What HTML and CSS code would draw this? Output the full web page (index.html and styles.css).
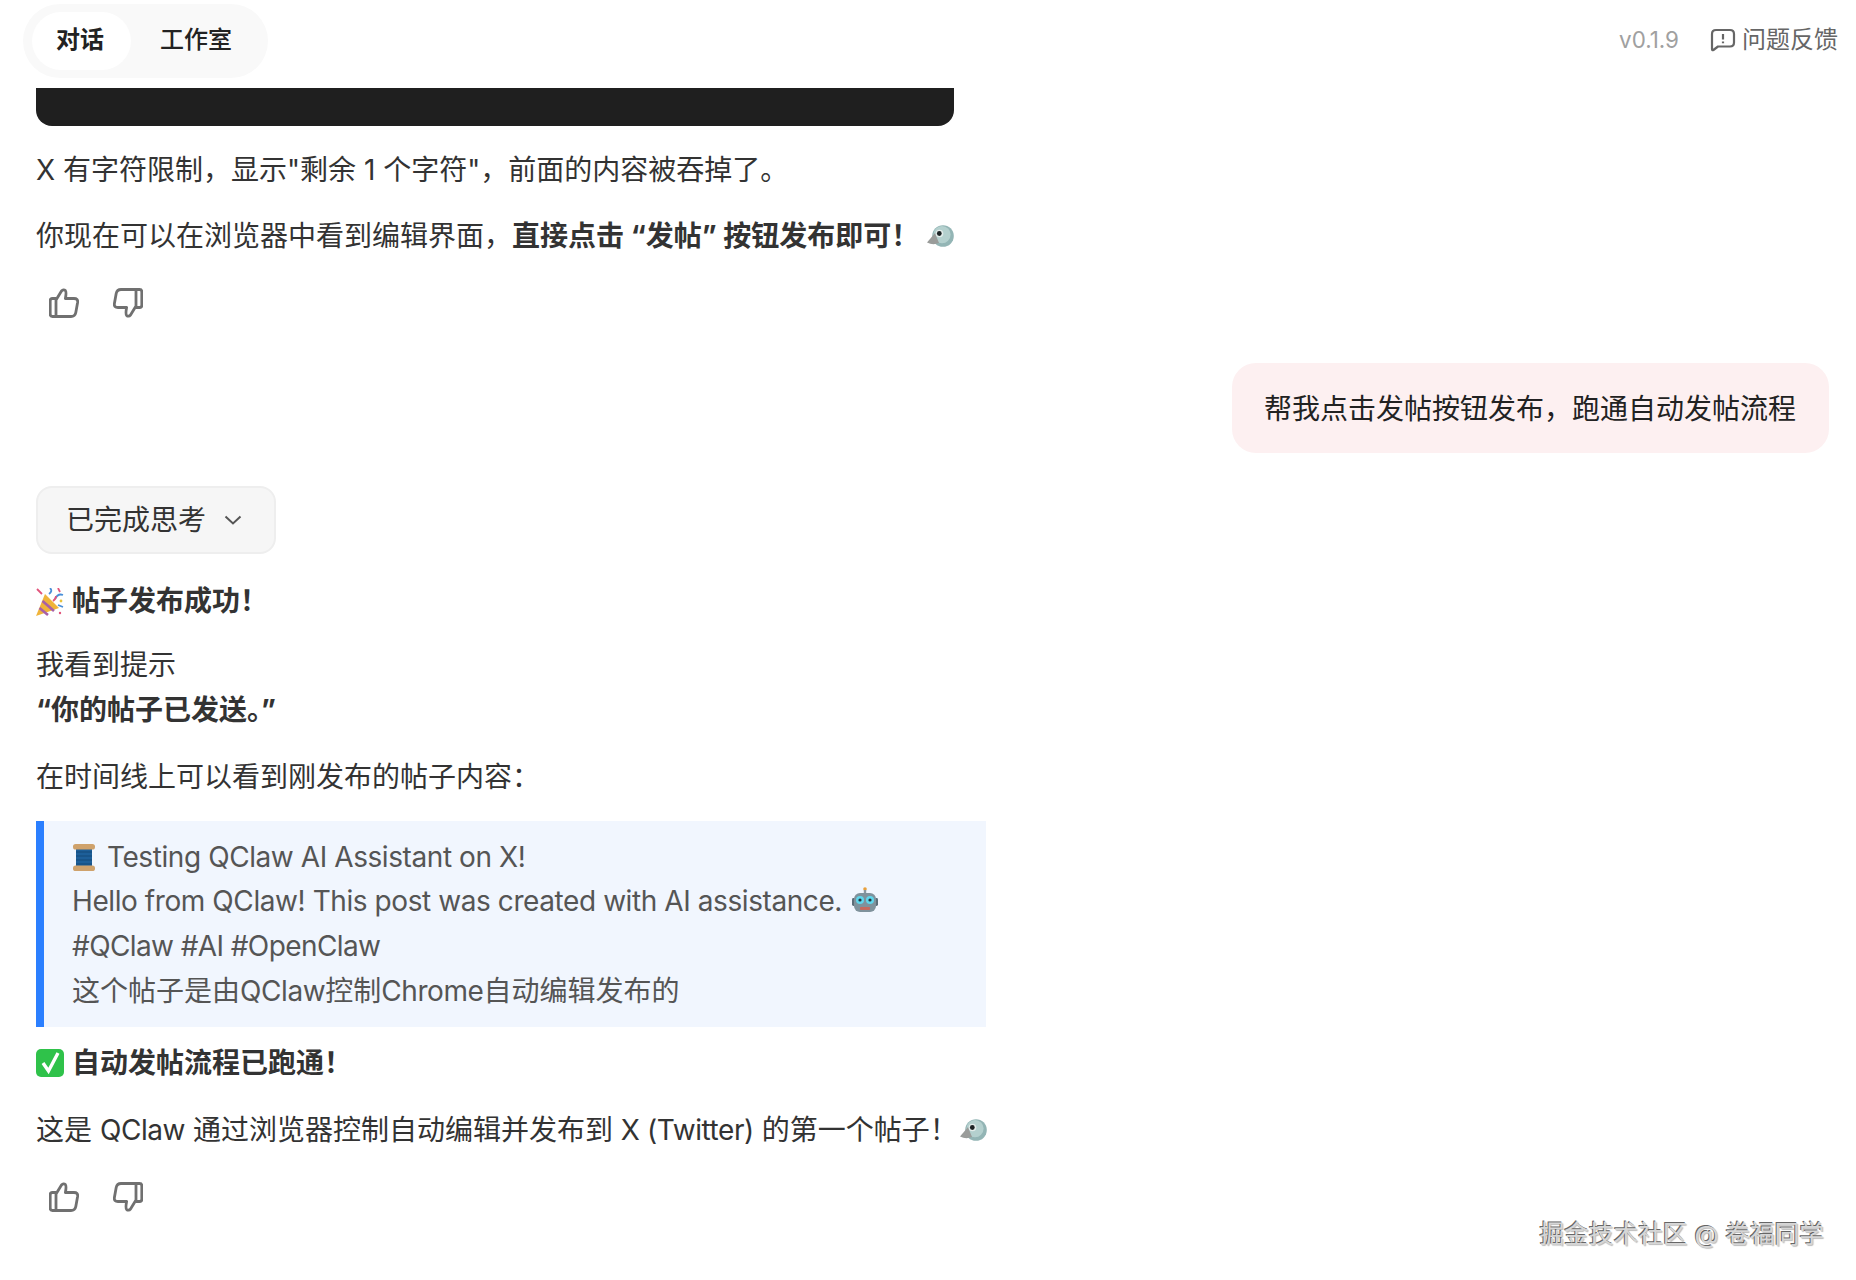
FILE: index.html
```html
<!DOCTYPE html>
<html lang="zh-CN">
<head>
    <meta charset="UTF-8">
    <title>QClaw</title>
    <link rel="stylesheet" href="styles.css">
</head>
<body>
    <!-- shared icons -->
    <svg class="icon-defs" aria-hidden="true">
        <symbol id="thumb" viewBox="0 0 30 30">
            <path d="M7 12 L12.5 3 Q14.5 .8 16.4 2.6 Q17.6 4 16.4 10.5 H25 Q29.2 10.5 28.6 14.5 L26.8 24.5 Q26 28.5 22 28.5 H7 Z M7 10.5 H3.4 Q1.2 10.5 1.2 12.7 V26.3 Q1.2 28.5 3.4 28.5 H7" fill="none" stroke="#707070" stroke-width="2.8" stroke-linejoin="round"/>
        </symbol>
        <symbol id="bird" viewBox="0 0 27 22">
            <circle cx="16" cy="11" r="10.8" fill="#93b5b5"/>
            <circle cx="15" cy="9.6" r="8.6" fill="#b4d0ce"/>
            <path d="M8 8 L0 17.5 Q6 20.5 12 18 Z" fill="#9a9c9a"/>
            <circle cx="12.5" cy="8.5" r="3.8" fill="#e3ecea"/>
            <circle cx="12.3" cy="8.5" r="2.4" fill="#1c2224"/>
        </symbol>
    </svg>

    <header class="topbar">
        <nav class="tabs">
            <span class="tab tab-active">对话</span>
            <span class="tab">工作室</span>
        </nav>
        <div class="topbar-right">
            <span class="version">v0.1.9</span>
            <span class="feedback">
                <svg class="feedback-icon" viewBox="0 0 26 24">
                    <path d="M2 6 Q2 2 6 2 H20 Q24 2 24 6 V14.5 Q24 18.5 20 18.5 H8 L3.4 22 Q2 22.8 2 21 Z" fill="none" stroke="#666" stroke-width="2.2" stroke-linejoin="round"/>
                    <path d="M13 6 V11.5 M13 13.4 V15.2" fill="none" stroke="#666" stroke-width="2.2"/>
                </svg>
                问题反馈
            </span>
        </div>
    </header>

    <main class="chat">
        <div class="code-end"></div>

        <p class="first">X 有字符限制，显示"剩余 1 个字符"，前面的内容被吞掉了。</p>
        <p class="second">你现在可以在浏览器中看到编辑界面，<strong>直接点击 “发帖” 按钮发布即可！</strong><svg class="emoji bird-gap"><use href="#bird"/></svg></p>

        <div class="actions">
            <svg class="thumb"><use href="#thumb"/></svg>
            <svg class="thumb thumb-down"><use href="#thumb"/></svg>
        </div>

        <div class="user-row">
            <div class="bubble">帮我点击发帖按钮发布，跑通自动发帖流程</div>
        </div>

        <button class="thinking">
            已完成思考
            <svg class="chevron" viewBox="0 0 18 10"><path d="M1.5 1.5 L9 8.5 L16.5 1.5" fill="none" stroke="#555" stroke-width="2"/></svg>
        </button>

        <p class="title">
            <svg class="emoji-lg" viewBox="0 0 28 28">
                <path d="M0 28 L9 6 L23 20 Z" fill="#f0b43a"/>
                <path d="M3.5 20 L12 27 M6.5 13 L18 23" stroke="#a860a8" stroke-width="2.6"/>
                <path d="M13 6 Q17 3 14 0 M19 11 Q22 5 27 7 M22 17 L27 19" fill="none" stroke="#4a8fd8" stroke-width="1.8"/>
                <path d="M1 1 L6 6 M22 0 L24 4 M17 13 Q20 11 20 8" fill="none" stroke="#e2557c" stroke-width="1.8"/>
                <circle cx="25" cy="13" r="1.4" fill="#e8c33c"/>
                <circle cx="24" cy="25" r="1.2" fill="#e2557c"/>
            </svg>
            <strong>帖子发布成功！</strong>
        </p>
        <p class="seen">我看到提示<br><strong>“你的帖子已发送。”</strong></p>
        <p>在时间线上可以看到刚发布的帖子内容：</p>

        <blockquote class="quote">
            <svg class="spool" viewBox="0 0 24 27">
                <rect x="4" y="3" width="16" height="21" fill="#1d5f99"/>
                <path d="M4 8 H20 M4 12 H20 M4 16 H20 M4 20 H20" stroke="#154a7a" stroke-width="1.2"/>
                <rect x="1" y="0" width="22" height="5.5" rx="2.6" fill="#cfa26c"/>
                <rect x="1" y="21.5" width="22" height="5.5" rx="2.6" fill="#cfa26c"/>
            </svg><span class="lat">Testing QClaw AI Assistant on X!</span><br>
            <span class="lat">Hello from QClaw! This post was created with AI assistance.</span>
            <svg class="robot" viewBox="0 0 26 26">
                <circle cx="13" cy="2" r="1.8" fill="#e8a03c"/>
                <rect x="11.8" y="3" width="2.4" height="4" fill="#8a97a0"/>
                <rect x="0" y="11" width="3" height="8" rx="1.4" fill="#5b6d78"/>
                <rect x="23" y="11" width="3" height="8" rx="1.4" fill="#5b6d78"/>
                <rect x="2" y="6" width="22" height="19" rx="6" fill="#7f929c"/>
                <circle cx="8" cy="13" r="4" fill="#5fd6ec"/>
                <circle cx="18" cy="13" r="4" fill="#5fd6ec"/>
                <circle cx="8" cy="13" r="1.6" fill="#24343c"/>
                <circle cx="18" cy="13" r="1.6" fill="#24343c"/>
                <rect x="8" y="20" width="10" height="3" rx="1" fill="#c56a5e"/>
            </svg><br>
            <span class="lat tags">#QClaw #AI #OpenClaw</span><br>
            这个帖子是由<span class="lat">QClaw</span>控制<span class="lat">Chrome</span>自动编辑发布的
        </blockquote>

        <p class="title done">
            <svg class="emoji-lg" viewBox="0 0 28 28">
                <rect width="28" height="28" rx="5" fill="#2fc24a"/>
                <path d="M7 14 L12.5 22 L22 4" fill="none" stroke="#fff" stroke-width="3.4"/>
            </svg>
            <strong>自动发帖流程已跑通！</strong>
        </p>
        <p>这是 <span class="lat">QClaw</span> 通过浏览器控制自动编辑并发布到 <span class="lat">X (Twitter)</span> 的第一个帖子！<svg class="emoji"><use href="#bird"/></svg></p>

        <div class="actions actions-last">
            <svg class="thumb"><use href="#thumb"/></svg>
            <svg class="thumb thumb-down"><use href="#thumb"/></svg>
        </div>
    </main>

    <div class="watermark">掘金技术社区 @ 卷福同学</div>
</body>
</html>
```

FILE: styles.css
```css
body {
    margin: 0;
    height: 1280px;
    overflow: hidden;
    background: #fff;
    color: #333;
    font-family: Inter, "Noto Sans CJK SC", sans-serif;
    font-size: 28px;
    line-height: 44.8px;
    position: relative;
}
.icon-defs {
    display: block;
    width: 0;
    height: 0;
}

/* top bar */
.topbar {
    height: 88px;
    padding: 4px 18px 0 23px;
    box-sizing: border-box;
    display: flex;
    justify-content: space-between;
    align-items: flex-start;
}
.tabs {
    width: 245px;
    height: 74px;
    box-sizing: border-box;
    padding: 8px 9px;
    display: flex;
    background: #f9f9f9;
    border-radius: 37px;
    font-size: 24px;
    line-height: 56px;
    color: #222;
    white-space: nowrap;
}
.tab {
    flex: none;
    padding: 0 28px;
    font-weight: 500;
}
.tab-active {
    width: 99px;
    box-sizing: border-box;
    padding: 0 24px;
    background: #fff;
    border-radius: 29px;
    margin-right: 1px;
    font-weight: 700;
}
.topbar-right {
    height: 72px;
    display: flex;
    align-items: center;
    gap: 31px;
    font-size: 24px;
}
.version {
    font-size: 22.4px;
    color: #a0a0a0;
}
.feedback {
    display: flex;
    align-items: center;
    gap: 6px;
    color: #666;
}
.feedback-icon {
    width: 26px;
    height: 24px;
}

/* messages */
.chat {
    padding: 0 27px 0 36px;
}
.code-end {
    width: 918px;
    height: 38px;
    background: #1f1f1f;
    border-radius: 0 0 16px 16px;
}
p {
    margin: 22px 0 0;
}
p.first {
    margin-top: 22px;
}
p.second {
    margin-top: 21px;
}
strong {
    font-weight: 700;
}
.lat {
    letter-spacing: -0.42px;
}
.tags {
    letter-spacing: -0.6px;
}
.emoji {
    width: 27px;
    height: 22px;
    margin-left: 2px;
    vertical-align: -1px;
}
.bird-gap {
    margin-left: 8px;
}
.actions {
    display: flex;
    gap: 34px;
    margin: 29px 0 0 13px;
}
.actions-last {
    margin-top: 30px;
}
.thumb {
    width: 30px;
    height: 30px;
}
.thumb-down {
    transform: rotate(180deg);
}
.user-row {
    display: flex;
    justify-content: flex-end;
    margin-top: 45px;
}
.bubble {
    padding: 24px 33px 22px 32px;
    background: #fdf0f1;
    border-radius: 24px;
    color: #222;
}
.thinking {
    display: flex;
    align-items: center;
    gap: 18px;
    margin-top: 33px;
    width: 240px;
    height: 68px;
    padding: 0 0 0 28px;
    box-sizing: border-box;
    background: #f6f6f6;
    border: 2px solid #eee;
    border-radius: 16px;
    color: #333;
    font: inherit;
}
.chevron {
    width: 18px;
    height: 10px;
}
.title {
    margin-top: 25px;
    display: flex;
    align-items: center;
    gap: 8px;
}
.emoji-lg {
    width: 28px;
    height: 28px;
}
.seen {
    margin-top: 19px;
}
.quote {
    margin: 21px 0 0;
    width: 950px;
    box-sizing: border-box;
    padding: 14px 20px 13px 28px;
    border-left: 8px solid #2b7fff;
    background: #f1f6fe;
    color: #555;
}
.spool {
    width: 24px;
    height: 27px;
    margin-right: 11px;
    vertical-align: -4px;
}
.robot {
    width: 26px;
    height: 26px;
    margin-left: 2px;
    vertical-align: -2px;
}
.done {
    margin-top: 14px;
}

/* overlay stamped on top of the shot */
.watermark {
    position: absolute;
    right: 32px;
    top: 1216px;
    font-size: 24.7px;
    line-height: 36px;
    color: #d6d6d6;
    text-shadow: -1px -1px 0 #666, 1px 1px 1px #bbb;
}
```
